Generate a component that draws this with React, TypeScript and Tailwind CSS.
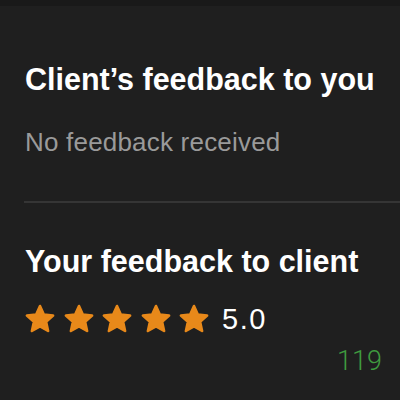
import { ReactNode } from 'react';

// Rounded five-point star used for the rating row
function Star() {
  return (
    <svg viewBox="0 0 30 30" className="w-[30px] h-[30px] shrink-0" aria-hidden>
      <polygon
        points="15,2 18.8,10.6 28.1,11.5 21.1,17.8 23.1,27 15,22.3 6.9,27 8.9,17.8 1.9,11.5 11.2,10.6"
        fill="#e8891a"
        stroke="#e8891a"
        strokeWidth="2.6"
        strokeLinejoin="round"
      />
    </svg>
  );
}

function Section({ title, children }: { title: string; children: ReactNode }) {
  return (
    <div className="px-[25px]">
      <h2 className="text-[30.5px] leading-[36px] font-bold text-white">{title}</h2>
      {children}
    </div>
  );
}

export default function App() {
  return (
    <div
      className="w-[400px] h-[400px] bg-[#1f1f1f] overflow-hidden"
      style={{ fontFamily: '"Liberation Sans", Arial, sans-serif' }}
    >
      <div className="h-[6px] bg-[#191919]" />
      <div className="pt-[55px]">
        <Section title="Client’s feedback to you">
          <p className="mt-[31px] text-[26px] leading-[28px] tracking-[0.2px] text-[#9a9a9a]">No feedback received</p>
        </Section>
      </div>

      <div className="ml-[24px] mt-[45px] h-[2px] bg-[#353535]" />

      <div className="pt-[40px]">
        <Section title="Your feedback to client">
          <div className="mt-[24px] flex items-center">
            <div className="flex gap-[8.5px]">
              <Star />
              <Star />
              <Star />
              <Star />
              <Star />
            </div>
            <span className="ml-[13px] text-[29px] leading-[32px] tracking-[1.5px] text-white">5.0</span>
          </div>
        </Section>
      </div>

      <div className="flex justify-end pr-[18px] mt-[12px]">
        <span className="text-[27px] leading-[28px] font-light text-[#3f9b3f]" style={{ fontFamily: 'Roboto, sans-serif' }}>
          119
        </span>
      </div>
    </div>
  );
}
